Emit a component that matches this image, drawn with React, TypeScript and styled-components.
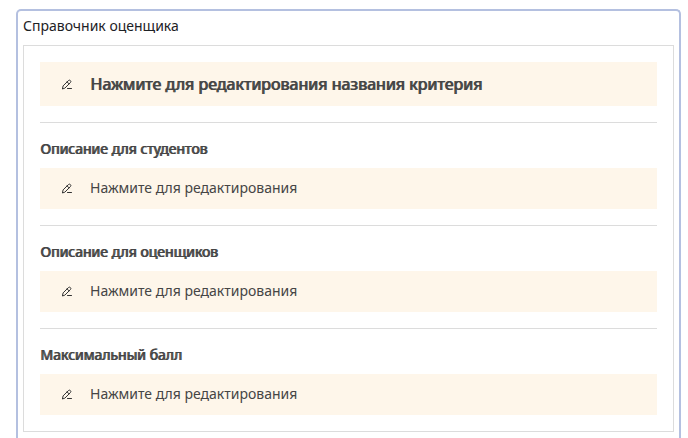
import React from "react";
import styled, { createGlobalStyle } from "styled-components";

const GlobalStyle = createGlobalStyle`
  *, *::before, *::after { box-sizing: border-box; }
  body {
    margin: 0;
    background: #fff;
    color: #454545;
    font-family: "Noto Sans", "Open Sans", sans-serif;
    font-size: 14px;
    line-height: 20px;
  }
`;

const Page = styled.main`
  display: flex;
  flex-direction: column;
  min-height: 100vh;
  padding: 9px 7px 0 16px;
`;

const Guide = styled.section`
  flex: 1;
  padding: 5px 5px 6px;
  border: 2px solid #b4c0e0;
  border-bottom: 0;
  border-radius: 5px 5px 0 0;
`;

const GuideTitle = styled.h1`
  margin: 0 0 10px;
  color: #1d2125;
  font-size: 14px;
  font-weight: 400;
  line-height: 19px;
`;

const Criterion = styled.div`
  padding: 16px;
  border: 1px solid #dcdcdc;
`;

const Field = styled.div`
  margin-top: 16px;
  padding-top: 16px;
  border-top: 1px solid #dcdcdc;
`;

const FieldLabel = styled.h2`
  margin: 0 0 10px;
  font-size: 14px;
  font-weight: 400;
  line-height: 19px;
  text-shadow: 1px 0 currentColor;
`;

const EditButton = styled.button<{ $heading?: boolean }>`
  display: flex;
  align-items: center;
  gap: 16px;
  width: 100%;
  min-height: ${(p) => (p.$heading ? 44 : 41)}px;
  padding: ${(p) => (p.$heading ? "9px 20px" : "7px 20px 9px")};
  border: 0;
  background: #fef6ea;
  color: inherit;
  font-family: inherit;
  font-size: ${(p) => (p.$heading ? 16 : 14)}px;
  font-weight: 400;
  line-height: 24px;
  text-align: left;
  cursor: pointer;
  text-shadow: ${(p) => (p.$heading ? "1px 0 currentColor" : "none")};
`;

const IconBox = styled.svg`
  flex: none;
  width: 14px;
  height: 14px;
  fill: none;
  stroke: #333;
  stroke-linecap: round;
  stroke-linejoin: round;
`;

function PenIcon() {
  return (
    <IconBox viewBox="0 0 14 14" aria-hidden="true">
      <path d="M2.5 11.6 3.1 8.9 8.4 3.6a1.4 1.4 0 0 1 2 2L5.1 10.9zM7.1 4.9l2 2" />
      <path d="M7.5 11.5h4" />
    </IconBox>
  );
}

const fields = [
  { id: "students", label: "Описание для студентов" },
  { id: "markers", label: "Описание для оценщиков" },
  { id: "score", label: "Максимальный балл" },
];

export default function App() {
  return (
    <>
      <GlobalStyle />
      <Page>
        <Guide aria-labelledby="guide-title">
          <GuideTitle id="guide-title">Справочник оценщика</GuideTitle>
          <Criterion>
            <EditButton type="button" $heading>
              <PenIcon />
              <span>Нажмите для редактирования названия критерия</span>
            </EditButton>
            {fields.map(({ id, label }) => (
              <Field key={id}>
                <FieldLabel id={`${id}-label`}>{label}</FieldLabel>
                <EditButton
                  type="button"
                  id={`${id}-button`}
                  aria-labelledby={`${id}-label ${id}-button`}
                >
                  <PenIcon />
                  <span>Нажмите для редактирования</span>
                </EditButton>
              </Field>
            ))}
          </Criterion>
        </Guide>
      </Page>
    </>
  );
}
